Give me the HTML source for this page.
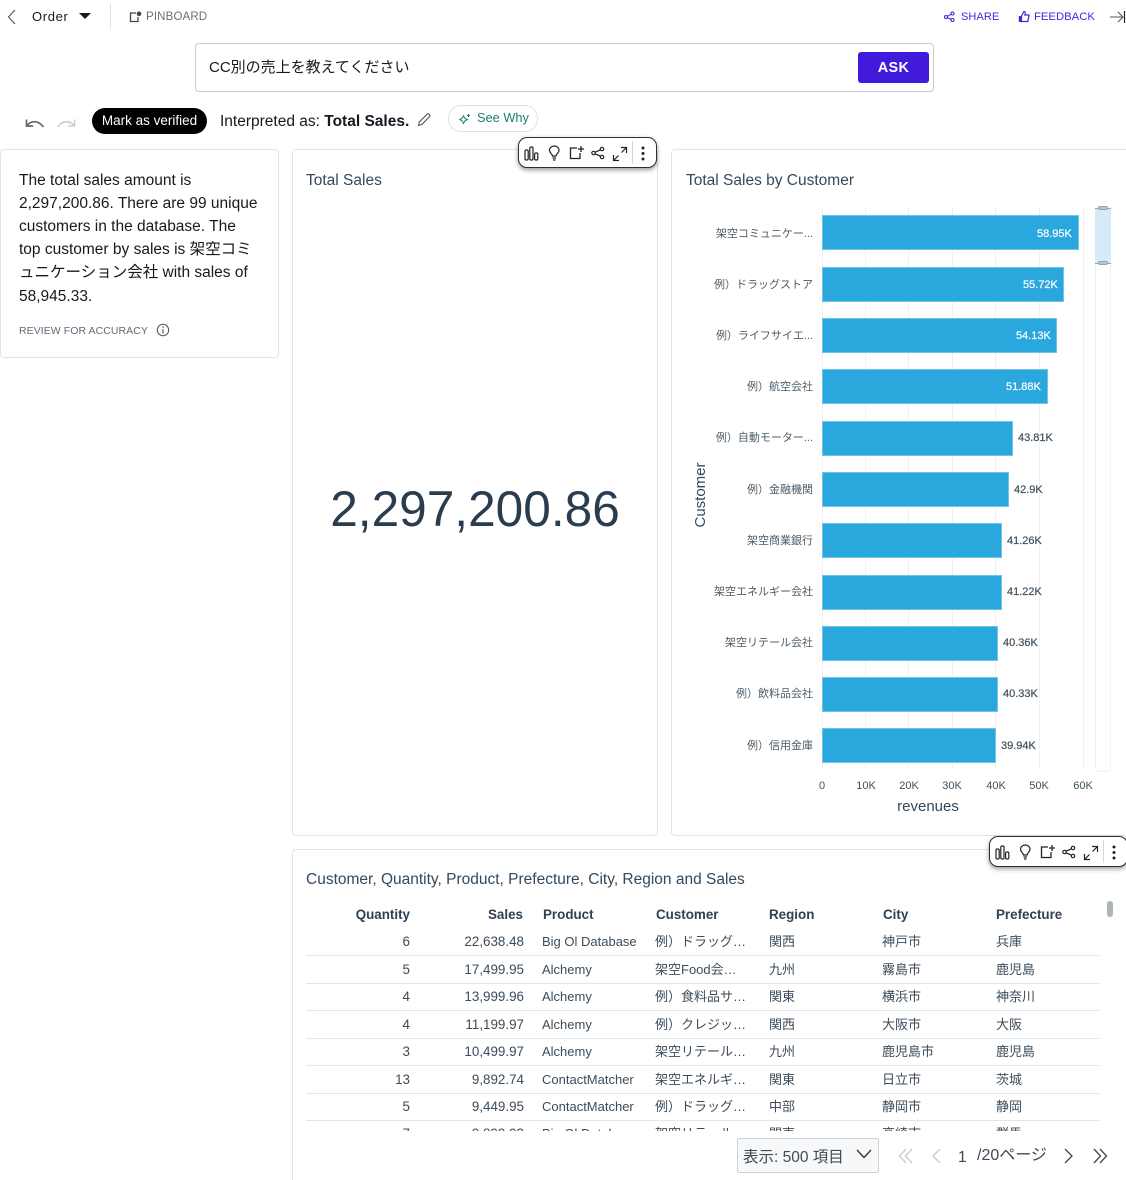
<!DOCTYPE html>
<html lang="ja"><head><meta charset="utf-8"><title>Order</title>
<style>
html,body{margin:0;padding:0;background:#fff}
#p{position:relative;width:1126px;height:1180px;overflow:hidden;background:#fff;font-family:"Liberation Sans","Noto Sans CJK JP",sans-serif;color:#16191f}
.t{position:absolute;white-space:nowrap;line-height:20px;height:20px}
.r{text-align:right}
.b{position:absolute;box-sizing:border-box}
.card{position:absolute;box-sizing:border-box;border:1px solid #e1e4e8;border-radius:4px;background:#fff}
.bar{position:absolute;left:822px;height:35px;background:#2aa8de;border:1px solid #6fc4ea;box-sizing:border-box}
.grid{position:absolute;top:207px;height:561px;width:1px;background:#eef0f2}
.yl{position:absolute;right:313px;white-space:nowrap;font-size:11px;line-height:16px;color:#4c5c68;margin-top:1px}
.vl{position:absolute;white-space:nowrap;font-size:11px;line-height:16px;color:#3f4f5b;margin-top:1px;-webkit-text-stroke:.2px currentColor}
.xl{position:absolute;top:778px;width:40px;text-align:center;font-size:11px;line-height:14px;color:#3f4f5b;margin-top:1px}
.th{position:absolute;top:904px;font-size:13.400px;font-weight:700;line-height:20px;color:#2f4152;white-space:nowrap;margin-top:1px}
.td{position:absolute;font-size:13px;line-height:20px;color:#3c4c5a;white-space:nowrap;margin-top:1px}
.n{font-size:13.400px}
.ln{position:absolute;left:306px;width:793px;height:1px;background:#e3e6e9}
.tb{position:absolute;box-sizing:border-box;height:31px;background:#fff;border:1px solid #232f3e;border-radius:9px;box-shadow:0 2px 5px rgba(0,0,0,.4)}
svg{position:absolute;overflow:visible}
</style></head><body><div id="p">

<!-- top bar -->
<svg style="left:6px;top:9px" width="11" height="16" viewBox="0 0 11 16"><path d="M9 1L2.500 8L9 15" fill="none" stroke="#555" stroke-width="1.100"/></svg>
<div class="t" style="left:32px;top:7px;font-size:13px;color:#16191f;letter-spacing:.65px">Order</div>
<svg style="left:79px;top:13px" width="13" height="7" viewBox="0 0 13 7"><path d="M0 0H12L6 6Z" fill="#16191f"/></svg>
<div class="b" style="left:110px;top:4px;width:1px;height:25px;background:#dcdfe3"></div>
<svg style="left:129px;top:11px" width="13" height="12" viewBox="0 0 13 12"><path d="M7 2H1.500V10.500H9V6" fill="none" stroke="#444" stroke-width="1.300"/><circle cx="10" cy="2.800" r="2.300" fill="#444"/></svg>
<div class="t" style="left:146px;top:7px;font-size:11.500px;color:#687078;letter-spacing:.15px;margin-top:0">PINBOARD</div>

<svg style="left:944px;top:11px" width="11" height="12" viewBox="0 0 11 12"><g fill="none" stroke="#4a22e0" stroke-width="1.100"><circle cx="2" cy="6" r="1.500"/><circle cx="8.500" cy="2.500" r="1.500"/><circle cx="8.500" cy="9" r="1.500"/><path d="M3.300 5.300L7.200 3.200M3.300 6.700L7.200 8.300"/></g></svg>
<div class="t" style="left:961px;top:7px;font-size:11px;color:#4a22e0;letter-spacing:.1px">SHARE</div>
<svg style="left:1018px;top:10px" width="12" height="13" viewBox="0 0 12 13"><path d="M3.500 6L6 1.500C7 1.500 7.500 2.300 7.200 3.500L6.800 5H11L9.800 11.500H3.500Z" fill="none" stroke="#4a22e0" stroke-width="1.200"/><path d="M.8 6H3V12H.8Z" fill="#4a22e0"/></svg>
<div class="t" style="left:1034px;top:7px;font-size:11.300px;color:#4a22e0">FEEDBACK</div>
<svg style="left:1110px;top:10px" width="16" height="14" viewBox="0 0 16 14"><path d="M0 7H13M8 2L13 7L8 12" fill="none" stroke="#555" stroke-width="1.100"/><path d="M14.500 1V13" stroke="#222" stroke-width="1.200"/></svg>

<!-- search -->
<div class="b" style="left:195px;top:43px;width:739px;height:49px;border:1px solid #c9cccf;border-radius:4px"></div>
<div class="t" style="left:209px;top:58px;font-size:15px;color:#16191f">CC別の売上を教えてください</div>
<div class="b" style="left:858px;top:52px;width:71px;height:31px;background:#421adb;border-radius:3px;color:#fff;font-size:14.500px;font-weight:700;line-height:32px;text-align:center;letter-spacing:.3px">ASK</div>

<!-- action row -->
<svg style="left:25px;top:118px" width="20" height="11" viewBox="0 0 20 11"><path d="M1.500 1.500V8H8M2 7.500C6 2.500 13 1.800 18.500 9" fill="none" stroke="#666" stroke-width="1.700"/></svg>
<svg style="left:56px;top:118px" width="20" height="11" viewBox="0 0 20 11"><path d="M18.500 1.500V8H12M18 7.500C14 2.500 7 1.800 1.500 9" fill="none" stroke="#c9cdd1" stroke-width="1.600"/></svg>
<div class="b" style="left:92px;top:108px;width:115px;height:26px;background:#000;border-radius:13px;color:#fff;font-size:13.500px;line-height:25px;text-align:center">Mark as verified</div>
<div class="t" style="left:220px;top:112px;font-size:15.500px;margin-top:0;color:#16191f;line-height:20px">Interpreted as: <b>Total Sales.</b></div>
<svg style="left:417px;top:113px" width="14" height="14" viewBox="0 0 14 14"><path d="M1.500 12.500L2.300 9L10 1.300C10.700.7 11.600.7 12.300 1.400C13 2.100 13 3 12.400 3.700L4.800 11.500Z" fill="none" stroke="#555" stroke-width="1.100"/></svg>
<div class="b" style="left:448px;top:105px;width:90px;height:27px;border:1px solid #dfe2e5;border-radius:13px"></div>
<svg style="left:459px;top:113px" width="12" height="12" viewBox="0 0 12 12"><path d="M4.500 2.800L6 5.500L8.500 6.500L6 7.800L4.500 10.500L3 7.800L.8 6.500L3 5.500Z" fill="none" stroke="#0f7f7c" stroke-width="1"/><path d="M9.500 1V4M8 2.500H11" stroke="#0f7f7c" stroke-width="1"/></svg>
<div class="t" style="left:477px;top:108px;font-size:12.800px;color:#1a7d72">See Why</div>

<!-- summary card -->
<div class="card" style="left:0;top:149px;width:279px;height:209px"></div>
<div class="t" style="left:19px;top:171px;font-size:15.500px;color:#16191f">The total sales amount is</div>
<div class="t" style="left:19px;top:194px;font-size:15.500px;color:#16191f">2,297,200.86. There are 99 unique</div>
<div class="t" style="left:19px;top:217px;font-size:15.500px;color:#16191f">customers in the database. The</div>
<div class="t" style="left:19px;top:240px;font-size:15.500px;color:#16191f">top customer by sales is 架空コミ</div>
<div class="t" style="left:19px;top:263px;font-size:15.500px;color:#16191f">ュニケーション会社 with sales of</div>
<div class="t" style="left:19px;top:287px;font-size:15.500px;color:#16191f">58,945.33.</div>
<div class="t" style="left:19px;top:321px;font-size:10.500px;color:#5f6b77;letter-spacing:.06px">REVIEW FOR ACCURACY</div>
<svg style="left:156px;top:323px" width="14" height="14" viewBox="0 0 14 14"><circle cx="7" cy="7" r="5.700" fill="none" stroke="#555" stroke-width="1"/><path d="M7 6V10.500" stroke="#555" stroke-width="1.100"/><circle cx="7" cy="4" r=".8" fill="#555"/></svg>

<!-- KPI card -->
<div class="card" style="left:292px;top:149px;width:366px;height:687px"></div>
<div class="t" style="left:306px;top:171px;font-size:15.500px;color:#33495c">Total Sales</div>
<div class="t" style="left:292px;top:480px;width:366px;height:58px;line-height:58px;text-align:center;font-size:49.600px;color:#2a3d4f">2,297,200.86</div>

<!-- Chart card -->
<div class="card" style="left:671px;top:149px;width:480px;height:687px"></div>
<div class="t" style="left:686px;top:171px;font-size:15.500px;color:#33495c">Total Sales by Customer</div>

<div class="grid" style="left:822px"></div><div class="grid" style="left:865px"></div><div class="grid" style="left:908px"></div><div class="grid" style="left:952px"></div><div class="grid" style="left:995px"></div><div class="grid" style="left:1039px"></div><div class="grid" style="left:1083px"></div>

<div class="bar" style="top:215px;width:257px"></div>
<div class="bar" style="top:267px;width:242px"></div>
<div class="bar" style="top:318px;width:235px"></div>
<div class="bar" style="top:369px;width:226px"></div>
<div class="bar" style="top:421px;width:191px"></div>
<div class="bar" style="top:472px;width:187px"></div>
<div class="bar" style="top:523px;width:180px"></div>
<div class="bar" style="top:575px;width:180px"></div>
<div class="bar" style="top:626px;width:176px"></div>
<div class="bar" style="top:677px;width:176px"></div>
<div class="bar" style="top:728px;width:174px"></div>

<div class="yl" style="top:225px">架空コミュニケー...</div>
<div class="yl" style="top:276px">例）ドラッグストア</div>
<div class="yl" style="top:327px">例）ライフサイエ...</div>
<div class="yl" style="top:378px">例）航空会社</div>
<div class="yl" style="top:429px">例）自動モーター...</div>
<div class="yl" style="top:481px">例）金融機関</div>
<div class="yl" style="top:532px">架空商業銀行</div>
<div class="yl" style="top:583px">架空エネルギー会社</div>
<div class="yl" style="top:634px">架空リテール会社</div>
<div class="yl" style="top:685px">例）飲料品会社</div>
<div class="yl" style="top:737px">例）信用金庫</div>

<div class="vl" style="left:1037px;top:225px;color:#fff">58.95K</div>
<div class="vl" style="left:1023px;top:276px;color:#fff">55.72K</div>
<div class="vl" style="left:1016px;top:327px;color:#fff">54.13K</div>
<div class="vl" style="left:1006px;top:378px;color:#fff">51.88K</div>
<div class="vl" style="left:1018px;top:429px">43.81K</div>
<div class="vl" style="left:1014px;top:481px">42.9K</div>
<div class="vl" style="left:1007px;top:532px">41.26K</div>
<div class="vl" style="left:1007px;top:583px">41.22K</div>
<div class="vl" style="left:1003px;top:634px">40.36K</div>
<div class="vl" style="left:1003px;top:685px">40.33K</div>
<div class="vl" style="left:1001px;top:737px">39.94K</div>

<div class="xl" style="left:802px">0</div><div class="xl" style="left:846px">10K</div><div class="xl" style="left:889px">20K</div><div class="xl" style="left:932px">30K</div><div class="xl" style="left:976px">40K</div><div class="xl" style="left:1019px">50K</div><div class="xl" style="left:1063px">60K</div>
<div class="t" style="left:828px;width:200px;top:797px;text-align:center;font-size:15px;color:#33495c">revenues</div>
<div class="t" style="left:641px;top:485px;width:120px;text-align:center;font-size:15px;color:#33495c;transform:rotate(-90deg)">Customer</div>

<!-- scrollbar in chart -->
<div class="b" style="left:1095px;top:207px;width:16px;height:565px;border:1px solid #eef0f2;border-top:0;border-radius:0 0 4px 4px"></div>
<div class="b" style="left:1095px;top:208px;width:16px;height:55px;background:#d4ecf7"></div>
<div class="b" style="left:1095px;top:208px;width:16px;height:1px;background:#8fa6b3"></div>
<div class="b" style="left:1095px;top:263px;width:16px;height:1px;background:#8fa6b3"></div>
<div class="b" style="left:1098px;top:206px;width:10px;height:4px;background:#b7c6cf;border:1px solid #8fa6b3;border-radius:2px"></div>
<div class="b" style="left:1098px;top:261px;width:10px;height:4px;background:#b7c6cf;border:1px solid #8fa6b3;border-radius:2px"></div>

<!-- Table card -->
<div class="card" style="left:292px;top:849px;width:860px;height:340px"></div>
<div class="t" style="left:306px;top:870px;font-size:15.500px;color:#33495c">Customer, Quantity, Product, Prefecture, City, Region and Sales</div>

<div class="th" style="right:716px">Quantity</div>
<div class="th" style="right:603px">Sales</div>
<div class="th" style="left:543px">Product</div>
<div class="th" style="left:656px">Customer</div>
<div class="th" style="left:769px">Region</div>
<div class="th" style="left:883px">City</div>
<div class="th" style="left:996px">Prefecture</div>

<div class="b" style="left:1107px;top:901px;width:6px;height:16px;background:#aab7b8;border-radius:3px"></div>

<div class="ln" style="top:955px"></div><div class="ln" style="top:983px"></div><div class="ln" style="top:1010px"></div><div class="ln" style="top:1038px"></div><div class="ln" style="top:1065px"></div><div class="ln" style="top:1093px"></div><div class="ln" style="top:1120px"></div>

<div class="td n" style="right:716px;top:931px">6</div><div class="td n" style="right:602px;top:931px">22,638.48</div><div class="td" style="left:542px;top:931px">Big Ol Database</div><div class="td" style="left:655px;top:931px">例）ドラッグ…</div><div class="td" style="left:769px;top:931px">関西</div><div class="td" style="left:882px;top:931px">神戸市</div><div class="td" style="left:996px;top:931px">兵庫</div>
<div class="td n" style="right:716px;top:959px">5</div><div class="td n" style="right:602px;top:959px">17,499.95</div><div class="td" style="left:542px;top:959px">Alchemy</div><div class="td" style="left:655px;top:959px">架空Food会…</div><div class="td" style="left:769px;top:959px">九州</div><div class="td" style="left:882px;top:959px">霧島市</div><div class="td" style="left:996px;top:959px">鹿児島</div>
<div class="td n" style="right:716px;top:986px">4</div><div class="td n" style="right:602px;top:986px">13,999.96</div><div class="td" style="left:542px;top:986px">Alchemy</div><div class="td" style="left:655px;top:986px">例）食料品サ…</div><div class="td" style="left:769px;top:986px">関東</div><div class="td" style="left:882px;top:986px">横浜市</div><div class="td" style="left:996px;top:986px">神奈川</div>
<div class="td n" style="right:716px;top:1014px">4</div><div class="td n" style="right:602px;top:1014px">11,199.97</div><div class="td" style="left:542px;top:1014px">Alchemy</div><div class="td" style="left:655px;top:1014px">例）クレジッ…</div><div class="td" style="left:769px;top:1014px">関西</div><div class="td" style="left:882px;top:1014px">大阪市</div><div class="td" style="left:996px;top:1014px">大阪</div>
<div class="td n" style="right:716px;top:1041px">3</div><div class="td n" style="right:602px;top:1041px">10,499.97</div><div class="td" style="left:542px;top:1041px">Alchemy</div><div class="td" style="left:655px;top:1041px">架空リテール…</div><div class="td" style="left:769px;top:1041px">九州</div><div class="td" style="left:882px;top:1041px">鹿児島市</div><div class="td" style="left:996px;top:1041px">鹿児島</div>
<div class="td n" style="right:716px;top:1069px">13</div><div class="td n" style="right:602px;top:1069px">9,892.74</div><div class="td" style="left:542px;top:1069px">ContactMatcher</div><div class="td" style="left:655px;top:1069px">架空エネルギ…</div><div class="td" style="left:769px;top:1069px">関東</div><div class="td" style="left:882px;top:1069px">日立市</div><div class="td" style="left:996px;top:1069px">茨城</div>
<div class="td n" style="right:716px;top:1096px">5</div><div class="td n" style="right:602px;top:1096px">9,449.95</div><div class="td" style="left:542px;top:1096px">ContactMatcher</div><div class="td" style="left:655px;top:1096px">例）ドラッグ…</div><div class="td" style="left:769px;top:1096px">中部</div><div class="td" style="left:882px;top:1096px">静岡市</div><div class="td" style="left:996px;top:1096px">静岡</div>
<div class="b" style="left:294px;top:1121px;width:820px;height:10px;overflow:hidden">
<div class="td n" style="right:704px;top:2px">7</div><div class="td n" style="right:590px;top:2px">9,899.93</div><div class="td" style="left:248px;top:2px">Big Ol Database</div><div class="td" style="left:361px;top:2px">架空リテール…</div><div class="td" style="left:475px;top:2px">関東</div><div class="td" style="left:588px;top:2px">高崎市</div><div class="td" style="left:702px;top:2px">群馬</div>
</div>

<!-- pagination -->
<div class="b" style="left:737px;top:1138px;width:142px;height:35px;background:#f7f8f9;border:1px solid #cdd1d5;border-radius:2px"></div>
<div class="t" style="left:743px;top:1146px;font-size:15.500px;color:#3c4a56;margin-top:2px;">表示: 500 項目</div>
<svg style="left:856px;top:1149px" width="16" height="10" viewBox="0 0 16 10"><path d="M1 1L8 8.500L15 1" fill="none" stroke="#333" stroke-width="1.300"/></svg>
<svg style="left:898px;top:1148px" width="16" height="16" viewBox="0 0 16 16"><path d="M8 1L1.500 8L8 15M14 1L7.500 8L14 15" fill="none" stroke="#c5cacf" stroke-width="1.300"/></svg>
<svg style="left:931px;top:1148px" width="11" height="16" viewBox="0 0 11 16"><path d="M9 1L2 8L9 15" fill="none" stroke="#c5cacf" stroke-width="1.300"/></svg>
<div class="t" style="left:958px;top:1148px;font-size:15.500px;color:#3c4a56">1</div>
<div class="t" style="left:977px;top:1146px;font-size:16px;color:#3c4a56">/20ページ</div>
<svg style="left:1063px;top:1148px" width="11" height="16" viewBox="0 0 11 16"><path d="M2 1L9 8L2 15" fill="none" stroke="#444" stroke-width="1.300"/></svg>
<svg style="left:1092px;top:1148px" width="16" height="16" viewBox="0 0 16 16"><path d="M2 1L8.500 8L2 15M8 1L14.500 8L8 15" fill="none" stroke="#444" stroke-width="1.300"/></svg>

<!-- toolbar 1 -->
<div class="tb" style="left:518px;top:137px;width:139px">
<svg style="left:5px;top:8px" width="15" height="15" viewBox="0 0 15 15"><g fill="none" stroke="#222" stroke-width="1.200"><rect x="1" y="4" width="3.200" height="10" rx="1.200"/><rect x="5.800" y="1" width="3.200" height="13" rx="1.200"/><rect x="10.600" y="7" width="3.200" height="7" rx="1.200"/></g></svg>
<svg style="left:29px;top:7px" width="13" height="16" viewBox="0 0 13 16"><path d="M4.500 11C4.500 9 1.500 8 1.500 5.300C1.500 2.800 3.800 1 6.300 1C8.800 1 11 2.800 11 5.300C11 8 8 9 8 11ZM4.500 13H8M5 15H7.500" fill="none" stroke="#222" stroke-width="1.200"/></svg>
<svg style="left:50px;top:7px" width="16" height="15" viewBox="0 0 16 15"><path d="M8 3H1.500V13.500H11V8M12 1V7M9 4H15" fill="none" stroke="#222" stroke-width="1.300"/></svg>
<svg style="left:72px;top:8px" width="14" height="14" viewBox="0 0 14 14"><g fill="none" stroke="#222" stroke-width="1.200"><circle cx="2.500" cy="7" r="1.700"/><circle cx="11" cy="3" r="1.700"/><circle cx="11" cy="11" r="1.700"/><path d="M4 6.200L9.500 3.800M4 7.800L9.500 10.200"/></g></svg>
<svg style="left:93px;top:8px" width="16" height="16" viewBox="0 0 16 16"><path d="M2 14L6.500 9.500M9.500 6.500L14 2M9 1.500H14.500V7M1.500 9V14.500H7" fill="none" stroke="#222" stroke-width="1.200"/></svg>
<div class="b" style="left:113px;top:3px;width:1px;height:23px;background:#d5d8db"></div>
<svg style="left:122px;top:8px" width="4" height="15" viewBox="0 0 4 15"><circle cx="2" cy="2" r="1.500" fill="#222"/><circle cx="2" cy="7.500" r="1.500" fill="#222"/><circle cx="2" cy="13" r="1.500" fill="#222"/></svg>
</div>

<!-- toolbar 2 -->
<div class="tb" style="left:989px;top:836px;width:139px">
<svg style="left:5px;top:8px" width="15" height="15" viewBox="0 0 15 15"><g fill="none" stroke="#222" stroke-width="1.200"><rect x="1" y="4" width="3.200" height="10" rx="1.200"/><rect x="5.800" y="1" width="3.200" height="13" rx="1.200"/><rect x="10.600" y="7" width="3.200" height="7" rx="1.200"/></g></svg>
<svg style="left:29px;top:7px" width="13" height="16" viewBox="0 0 13 16"><path d="M4.500 11C4.500 9 1.500 8 1.500 5.300C1.500 2.800 3.800 1 6.300 1C8.800 1 11 2.800 11 5.300C11 8 8 9 8 11ZM4.500 13H8M5 15H7.500" fill="none" stroke="#222" stroke-width="1.200"/></svg>
<svg style="left:50px;top:7px" width="16" height="15" viewBox="0 0 16 15"><path d="M8 3H1.500V13.500H11V8M12 1V7M9 4H15" fill="none" stroke="#222" stroke-width="1.300"/></svg>
<svg style="left:72px;top:8px" width="14" height="14" viewBox="0 0 14 14"><g fill="none" stroke="#222" stroke-width="1.200"><circle cx="2.500" cy="7" r="1.700"/><circle cx="11" cy="3" r="1.700"/><circle cx="11" cy="11" r="1.700"/><path d="M4 6.200L9.500 3.800M4 7.800L9.500 10.200"/></g></svg>
<svg style="left:93px;top:8px" width="16" height="16" viewBox="0 0 16 16"><path d="M2 14L6.500 9.500M9.500 6.500L14 2M9 1.500H14.500V7M1.500 9V14.500H7" fill="none" stroke="#222" stroke-width="1.200"/></svg>
<div class="b" style="left:113px;top:3px;width:1px;height:23px;background:#d5d8db"></div>
<svg style="left:122px;top:8px" width="4" height="15" viewBox="0 0 4 15"><circle cx="2" cy="2" r="1.500" fill="#222"/><circle cx="2" cy="7.500" r="1.500" fill="#222"/><circle cx="2" cy="13" r="1.500" fill="#222"/></svg>
</div>

</div></body></html>
